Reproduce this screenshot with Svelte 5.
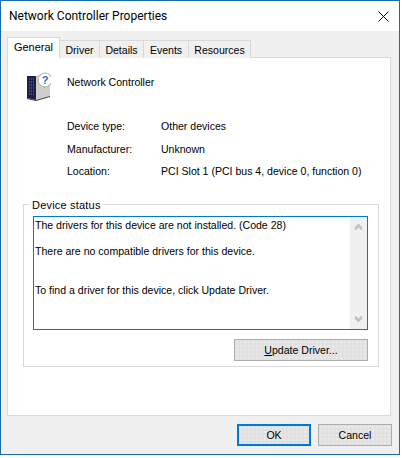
<script>
	const tabs = ['General', 'Driver', 'Details', 'Events', 'Resources'];
	const props = [
		['Device type:', 'Other devices'],
		['Manufacturer:', 'Unknown'],
		['Location:', 'PCI Slot 1 (PCI bus 4, device 0, function 0)']
	];
</script>

<div class="dialog">
	<header class="titlebar">
		<span class="title">Network Controller Properties</span>
		<svg class="close" width="11" height="11" viewBox="0 0 11 11">
			<path d="M0.5 0.5 L10.5 10.5 M10.5 0.5 L0.5 10.5" stroke="#000" stroke-width="1" fill="none" />
		</svg>
	</header>

	<main class="body">
		<div class="tabs">
			{#each tabs as tab, i}
				<div class="tab tab-{i}" class:active={i === 0}>{tab}</div>
			{/each}
		</div>

		<section class="panel">
			<div class="device">
				<svg class="device-icon" width="26" height="30" viewBox="0 0 26 30">
					<path d="M11 5 L19 3 L25 6 L25 25 L11 29 Z" fill="#cfcfca" />
					<path d="M2 5 L11 5 L11 29 L2 27 Z" fill="#1d2148" />
					<path d="M4 8h5M4 11h5M4 14h5M4 17h5M4 20h5M4 23h5" stroke="#b06a2c" stroke-width="1" stroke-dasharray="1 1" />
					<path d="M2 27 L11 29 L25 25 L25 26 L11 30 L2 28 Z" fill="#3a3550" />
					<circle cx="20" cy="9" r="7" fill="#fff" stroke="#a9a9a9" />
					<text x="20" y="13" class="q">?</text>
				</svg>
				<span>Network Controller</span>
			</div>

			<dl class="props">
				{#each props as [label, value]}
					<dt>{label}</dt>
					<dd>{value}</dd>
				{/each}
			</dl>

			<fieldset class="status">
				<legend>Device status</legend>
				<div class="textbox">
					<p class="message">The drivers for this device are not installed. (Code 28)<br /><br />There are no compatible drivers for this device.<br /><br /><br />To find a driver for this device, click Update Driver.</p>
					<div class="scrollbar">
						<svg width="9" height="7" viewBox="0 0 9 7">
							<path d="M1 5 L4.5 1.5 L8 5 M1 7 L4.5 3.5 L8 7" stroke="#bcbcbc" stroke-width="1.2" fill="none" />
						</svg>
						<svg width="9" height="7" viewBox="0 0 9 7">
							<path d="M1 0 L4.5 3.5 L8 0 M1 2 L4.5 5.5 L8 2" stroke="#bcbcbc" stroke-width="1.2" fill="none" />
						</svg>
					</div>
				</div>
				<div class="status-actions">
					<button class="btn update"><u>U</u>pdate Driver...</button>
				</div>
			</fieldset>
		</section>

		<footer class="actions">
			<button class="btn default">OK</button>
			<button class="btn">Cancel</button>
		</footer>
	</main>
</div>

<style>
	:global(body) {
		background: #fff;
	}

	.dialog {
		box-sizing: border-box;
		display: flex;
		flex-direction: column;
		width: 400px;
		height: 455px;
		border: 1px solid #1a6aae;
		background: #f0f0f0;
		color: #000;
		font-family: 'Liberation Sans', Arial, sans-serif;
		font-size: 10.55px;
	}

	.titlebar {
		display: flex;
		flex: none;
		align-items: center;
		justify-content: space-between;
		background: #fff;
		height: 30px;
		padding: 0 10px 0 8px;
	}

	.title {
		font-family: Roboto, sans-serif;
		font-size: 12px;
	}

	.body {
		display: flex;
		flex: 1;
		flex-direction: column;
		padding: 7px 8px 0 6px;
	}

	.tabs {
		display: flex;
		flex: none;
		align-items: flex-end;
		height: 20px;
		position: relative;
		z-index: 1;
		margin-bottom: -1px;
	}

	.tab {
		box-sizing: border-box;
		height: 18px;
		border: 1px solid #d9d9d9;
		border-bottom: none;
		border-left: none;
		background: #f0f0f0;
		line-height: 18px;
		text-align: center;
	}

	.tab.active {
		height: 21px;
		border-left: 1px solid #d9d9d9;
		background: #fff;
		font-size: 11px;
		line-height: 18px;
	}

	.tab-0 { width: 53px; }
	.tab-1 { width: 40px; }
	.tab-2 { width: 44px; }
	.tab-3 { width: 45px; }
	.tab-4 { width: 62px; }

	.panel {
		box-sizing: border-box;
		display: flex;
		flex-direction: column;
		height: 359px;
		border: 1px solid #d9d9d9;
		background: #fff;
		padding: 0 11px 0 15px;
	}

	.device {
		display: flex;
		align-items: flex-start;
		gap: 16px;
		height: 30px;
		margin: 13px 0 0 2px;
	}

	.device span {
		line-height: 22px;
	}

	.device-icon {
		flex: none;
	}

	.q {
		fill: #1f6fc0;
		font-size: 11px;
		font-weight: 700;
		text-anchor: middle;
	}

	.props {
		display: grid;
		grid-template-columns: 94px 1fr;
		grid-auto-rows: 22.5px;
		align-items: center;
		margin: 14px 0 0 44px;
	}

	dt,
	dd {
		margin: 0;
		white-space: nowrap;
	}

	.status {
		box-sizing: border-box;
		height: 169px;
		margin: 15px 0 0;
		border: 1px solid #d9d9d9;
		padding: 0 10px 0 9px;
		min-width: 0;
	}

	legend {
		margin-left: -3px;
		padding: 0 2px;
		font-size: 11px;
		letter-spacing: 0.2px;
		line-height: 14px;
	}

	.textbox {
		box-sizing: border-box;
		display: flex;
		justify-content: space-between;
		height: 114px;
		margin-top: 4px;
		border: 1px solid #0078d7;
	}

	.message {
		margin: 2px 0 0 1px;
		line-height: 13px;
		white-space: nowrap;
	}

	.scrollbar {
		display: flex;
		flex-direction: column;
		align-items: center;
		justify-content: space-between;
		width: 17px;
		padding: 6px 0;
		background: #f0f0f0;
		box-sizing: border-box;
	}

	.status-actions {
		display: flex;
		justify-content: flex-end;
		margin-top: 9px;
	}

	.btn {
		box-sizing: border-box;
		width: 74px;
		height: 22px;
		padding: 0;
		border: 1px solid #adadad;
		background-color: #e1e1e1;
		background-image: radial-gradient(#f1f1f1 0.6px, transparent 0.8px);
		background-size: 4px 4px;
		color: #000;
		font: inherit;
	}

	.update {
		width: 134px;
	}

	.default {
		border: 2px solid #0078d7;
	}

	.actions {
		display: flex;
		justify-content: flex-end;
		gap: 7px;
		margin: 8px -1px 0 0;
	}
</style>
